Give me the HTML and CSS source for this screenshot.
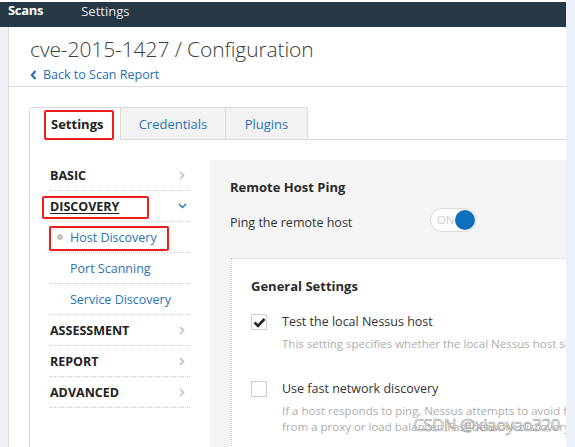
FILE: index.html
```html
<!DOCTYPE html>
<html>
<head>
<meta charset="utf-8">
<link rel="stylesheet" href="styles.css">
</head>
<body>
<div class="page">
  <div class="left">
    <div class="topbar">
      <span class="brand">Scans</span>
      <span class="toplink">Settings</span>
    </div>
    <div class="row">
      <div class="gutter"></div>
      <div class="main">
        <div class="header">
          <h1 class="title">cve-2015-1427 / Configuration</h1>
          <a class="back"><svg width="7" height="10" viewBox="0 0 7 10"><path d="M5.5 1 L1.8 5 L5.5 9" fill="none" stroke="#1f6fb8" stroke-width="2"/></svg>Back to Scan Report</a>
        </div>
        <div class="tabs">
          <div class="tab active"><span class="tablabel">Settings</span><span class="redbox rb-tab"></span></div>
          <div class="tab">Credentials</div>
          <div class="tab">Plugins</div>
          <div class="tabfill"></div>
        </div>
        <div class="content">
          <ul class="nav">
            <li class="item"><span>BASIC</span><svg class="chev" width="6" height="9" viewBox="0 0 6 9"><path d="M1 1 L4.5 4.5 L1 8" fill="none" stroke="#bdbdbd" stroke-width="1.5"/></svg></li>
            <li class="item"><span class="under">DISCOVERY</span><svg class="chevd" width="9" height="6" viewBox="0 0 9 6"><path d="M1 1 L4.5 4.5 L8 1" fill="none" stroke="#2a78bd" stroke-width="1.5"/></svg><span class="redbox rb-disc"></span></li>
            <li class="sub cur"><span class="dot"></span>Host Discovery<span class="redbox rb-host"></span></li>
            <li class="sub">Port Scanning</li>
            <li class="sub">Service Discovery</li>
            <li class="item"><span>ASSESSMENT</span><svg class="chev" width="6" height="9" viewBox="0 0 6 9"><path d="M1 1 L4.5 4.5 L1 8" fill="none" stroke="#bdbdbd" stroke-width="1.5"/></svg></li>
            <li class="item"><span>REPORT</span><svg class="chev" width="6" height="9" viewBox="0 0 6 9"><path d="M1 1 L4.5 4.5 L1 8" fill="none" stroke="#bdbdbd" stroke-width="1.5"/></svg></li>
            <li class="item"><span>ADVANCED</span><svg class="chev" width="6" height="9" viewBox="0 0 6 9"><path d="M1 1 L4.5 4.5 L1 8" fill="none" stroke="#bdbdbd" stroke-width="1.5"/></svg></li>
          </ul>
          <div class="panel">
            <h3 class="ptitle">Remote Host Ping</h3>
            <div class="prow">
              <span class="plabel">Ping the remote host</span>
              <span class="toggle"><span class="on">ON</span><span class="knob"></span></span>
            </div>
            <div class="box">
              <h3 class="btitle">General Settings</h3>
              <div class="opt">
                <span class="cb checked"><svg width="13" height="11" viewBox="0 0 13 11"><path d="M1.5 5.5 L5 9 L11.5 2" fill="none" stroke="#222" stroke-width="2.6"/></svg></span>
                <div class="otext">
                  <div class="olabel">Test the local Nessus host</div>
                  <div class="odesc">This setting specifies whether the local Nessus host should be scanned when it falls within the range of the target hosts for the scan.</div>
                </div>
              </div>
              <div class="opt">
                <span class="cb"></span>
                <div class="otext">
                  <div class="olabel">Use fast network discovery</div>
                  <div class="odesc">If a host responds to ping, Nessus attempts to avoid false positives, performing additional tests to verify the response did not come<br>from a proxy or load balancer. Fast network discovery bypasses those additional tests.</div>
                </div>
              </div>
              <span class="wm">CSDN @xiaoyao320</span>
            </div>
          </div>
        </div>
      </div>
    </div>
  </div>
  <div class="rgutter"></div>
</div>
</body>
</html>
```
FILE: styles.css
```css
* { box-sizing: border-box; }
html, body { margin: 0; padding: 0; height: 100%; overflow: hidden; }
body { font-family: "Open Sans", "Noto Sans", sans-serif; font-size: 12.5px; color: #333; background: #fff; }
.page { display: flex; width: 575px; height: 447px; }
.left { flex: 1; min-width: 0; display: flex; flex-direction: column; padding-top: 2px; }
.rgutter { width: 9px; background: #edf1fa; }
.topbar { height: 25px; background: #263746; display: flex; align-items: flex-start; padding-left: 8px; color: #fff; }
.brand { font-weight: 700; font-size: 13px; line-height: 17px; letter-spacing: -0.3px; }
.toplink { margin-left: 38px; font-size: 13px; line-height: 17px; color: #e6e9ee; padding-top: 1px; }
.row { flex: 1; display: flex; min-height: 0; }
.gutter { width: 9px; background: #eff1f5; border-right: 1px solid #dcdde0; }
.main { flex: 1; min-width: 0; overflow: hidden; background: #fff; }
.header { padding: 9px 0 0 21px; height: 60px; border-bottom: 1px solid #dcdcdc; }
.title { margin: 0; font-weight: 300; font-size: 21px; line-height: 26px; color: #3c3c3c; letter-spacing: -0.1px; }
.back { display: flex; align-items: center; gap: 6px; margin-top: 5px; color: #1f6fb8; font-size: 12.5px; line-height: 16px; }
.tabs { display: flex; margin: 20px 0 0 20px; height: 33px; }
.tab { position: relative; height: 33px; padding: 0 20px; line-height: 32px; background: #f2f2f2; border: 1px solid #d9d9d9; border-left: none; color: #2a73b8; font-size: 13px; }
.tab:nth-child(2) { width: 105px; text-align: center; padding: 0; }
.tab:nth-child(3) { width: 82px; text-align: center; padding: 0; }
.tab.active { width: 92px; background: #fff; border-left: 1px solid #d9d9d9; border-bottom: none; border-top-left-radius: 4px; color: #222; font-weight: 700; padding-left: 21px; }
.tabfill { flex: 1; border-bottom: 1px solid #d9d9d9; }
.redbox { position: absolute; border: 2px solid #f01d1d; border-radius: 2px; pointer-events: none; }
.rb-tab { left: 14px; top: 2px; width: 70px; height: 30px; }
.content { display: flex; border-left: 1px solid #d9d9d9; margin-left: 20px; padding: 20px 0 0 20px; gap: 20px; height: 400px; }
.nav { list-style: none; margin: 0; padding: 0; width: 140px; flex: none; }
.nav li { position: relative; height: 31px; display: flex; align-items: center; border-bottom: 1px dotted #cfcfcf; }
.item { font-weight: 700; color: #222; font-size: 12.5px; justify-content: space-between; padding-right: 5px; }
.under { text-decoration: underline; text-underline-offset: 2px; }
.chevd { margin-right: -2px; }
.sub { color: #2a73b8; padding-left: 20px; font-size: 12.5px; }
.dot { position: absolute; left: 7px; top: 12px; width: 6px; height: 6px; border-radius: 50%; background: #c4c4c4; }
.rb-disc { left: -8px; top: 5px; width: 107px; height: 23px; }
.rb-host { left: -1px; top: 4px; width: 120px; height: 25px; }
.panel { flex: 1; min-width: 0; background: #f4f4f4; padding: 17px 0 0 20px; }
.ptitle { margin: 0; font-size: 13px; font-weight: 700; color: #2b2b2b; line-height: 20px; }
.prow { display: flex; align-items: center; margin-top: 11px; height: 24px; }
.plabel { width: 200px; color: #333; margin-top: 4px; }
.toggle { position: relative; width: 47px; height: 24px; border: 1px solid #dcdcdc; border-radius: 12px; background: #fff; }
.on { position: absolute; left: 6px; top: 3px; font-size: 11.5px; line-height: 16px; color: #cfcfcf; letter-spacing: -0.3px; }
.knob { position: absolute; right: 1px; top: 1px; width: 20px; height: 20px; border-radius: 50%; background: #0b6fbd; }
.box { position: relative; margin-top: 26px; margin-left: 1px; background: #fff; border-top: 1px dotted #cfcfcf; border-left: 1px dotted #cfcfcf; padding: 17px 0 0 19px; height: 200px; }
.btitle { margin: 0; font-size: 13px; font-weight: 700; color: #2b2b2b; line-height: 20px; }
.opt { display: flex; margin-top: 17px; }
.opt + .opt { margin-top: 28px; }
.cb { flex: none; width: 16px; height: 16px; border: 1px solid #cfcfcf; background: #fff; display: flex; align-items: center; justify-content: center; margin-top: 1px; }
.otext { margin-left: 15px; min-width: 0; }
.olabel { white-space: nowrap; color: #333; line-height: 18px; }
.odesc { white-space: nowrap; color: #adadad; font-size: 11.5px; line-height: 16px; margin-top: 5px; }
.wm { position: absolute; left: 181px; top: 154px; font-family: "Open Sans", sans-serif; font-size: 17px; line-height: 24px; color: rgba(255,255,255,0.6); -webkit-text-stroke: 0.6px #9a9a9a; white-space: nowrap; letter-spacing: -0.5px; }
```
